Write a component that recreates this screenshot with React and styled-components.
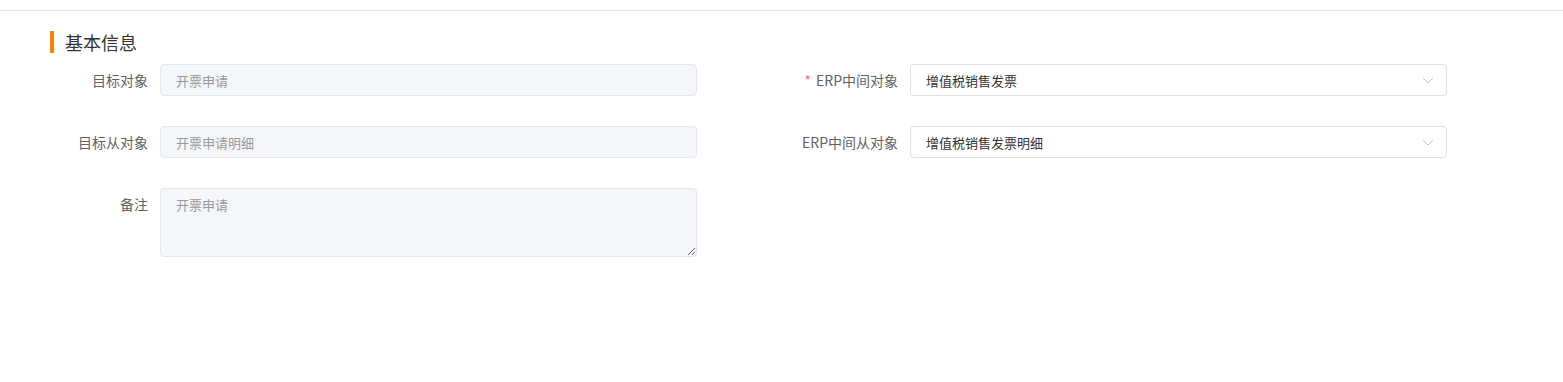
import React from 'react';
import styled, { createGlobalStyle } from 'styled-components';

const GlobalStyle = createGlobalStyle`
  body {
    margin: 0;
    background: #ffffff;
    font-family: "Noto Sans CJK SC", "Liberation Sans", sans-serif;
  }
`;

const fields = [
  { label: '目标对象', value: '开票申请', kind: 'input' },
  { label: 'ERP中间对象', value: '增值税销售发票', kind: 'select', required: true },
  { label: '目标从对象', value: '开票申请明细', kind: 'input' },
  { label: 'ERP中间从对象', value: '增值税销售发票明细', kind: 'select' },
  { label: '备注', value: '开票申请', kind: 'textarea' },
];

const Chevron = () => (
  <svg width="12" height="7" viewBox="0 0 12 7" fill="none">
    <path d="M1 1l5 5 5-5" stroke="#c0c4cc" strokeWidth="1" />
  </svg>
);

const Control = ({ kind, value }) => {
  if (kind === 'select') {
    return (
      <Select>
        <span>{value}</span>
        <Chevron />
      </Select>
    );
  }
  if (kind === 'textarea') {
    return <TextArea disabled defaultValue={value} />;
  }
  return <Input disabled defaultValue={value} />;
};

const App = () => {
  return (
    <>
      <GlobalStyle />
      <Page>
        <TopBar />
        <Section>
          <Title>基本信息</Title>
          <Form>
            {fields.map((f) => (
              <FormItem key={f.label}>
                <Label>
                  {f.required && <Star>*</Star>}
                  {f.label}
                </Label>
                <Control kind={f.kind} value={f.value} />
              </FormItem>
            ))}
          </Form>
        </Section>
      </Page>
    </>
  );
};

const Page = styled.div`
  width: 1563px;
  height: 382px;
  background: #fff;
`;

const TopBar = styled.div`
  height: 10px;
  border-bottom: 1px solid #e4e4e4;
`;

const Section = styled.section`
  padding: 20px 0 0 0;
`;

const Title = styled.h2`
  margin: 0 0 11px 50px;
  padding-left: 11px;
  height: 22px;
  line-height: 22px;
  border-left: 4px solid #ff8200;
  font-size: 18px;
  font-weight: normal;
  color: #333;
`;

const Form = styled.div`
  display: grid;
  grid-template-columns: 750px 750px;
  row-gap: 30px;
  padding-left: 48px;
`;

const FormItem = styled.div`
  display: flex;
  align-items: flex-start;
`;

const Label = styled.label`
  width: 112px;
  box-sizing: border-box;
  padding-right: 12px;
  text-align: right;
  line-height: 32px;
  font-size: 14px;
  color: #606266;
  white-space: nowrap;
`;

const Star = styled.span`
  color: #f56c6c;
  margin-right: 5px;
`;

const fieldBase = `
  width: 537px;
  box-sizing: border-box;
  border-radius: 4px;
  font-family: "Noto Sans CJK SC", "Liberation Sans", sans-serif;
  font-size: 13px;
  padding: 0 15px;
  outline: none;
`;

const Input = styled.input`
  ${fieldBase}
  height: 32px;
  border: 1px solid #e4e7ed;
  background: #f5f6fa;
  color: #999;
`;

const TextArea = styled.textarea`
  ${fieldBase}
  height: 69px;
  padding: 5px 15px;
  line-height: 21px;
  border: 1px solid #e4e7ed;
  background: #f5f6fa;
  color: #999;
  resize: vertical;
  display: block;
`;

const Select = styled.div`
  ${fieldBase}
  height: 32px;
  border: 1px solid #dcdfe6;
  background: #fff;
  color: #333;
  display: flex;
  align-items: center;
  justify-content: space-between;
  padding-right: 12px;
`;

export default App;
